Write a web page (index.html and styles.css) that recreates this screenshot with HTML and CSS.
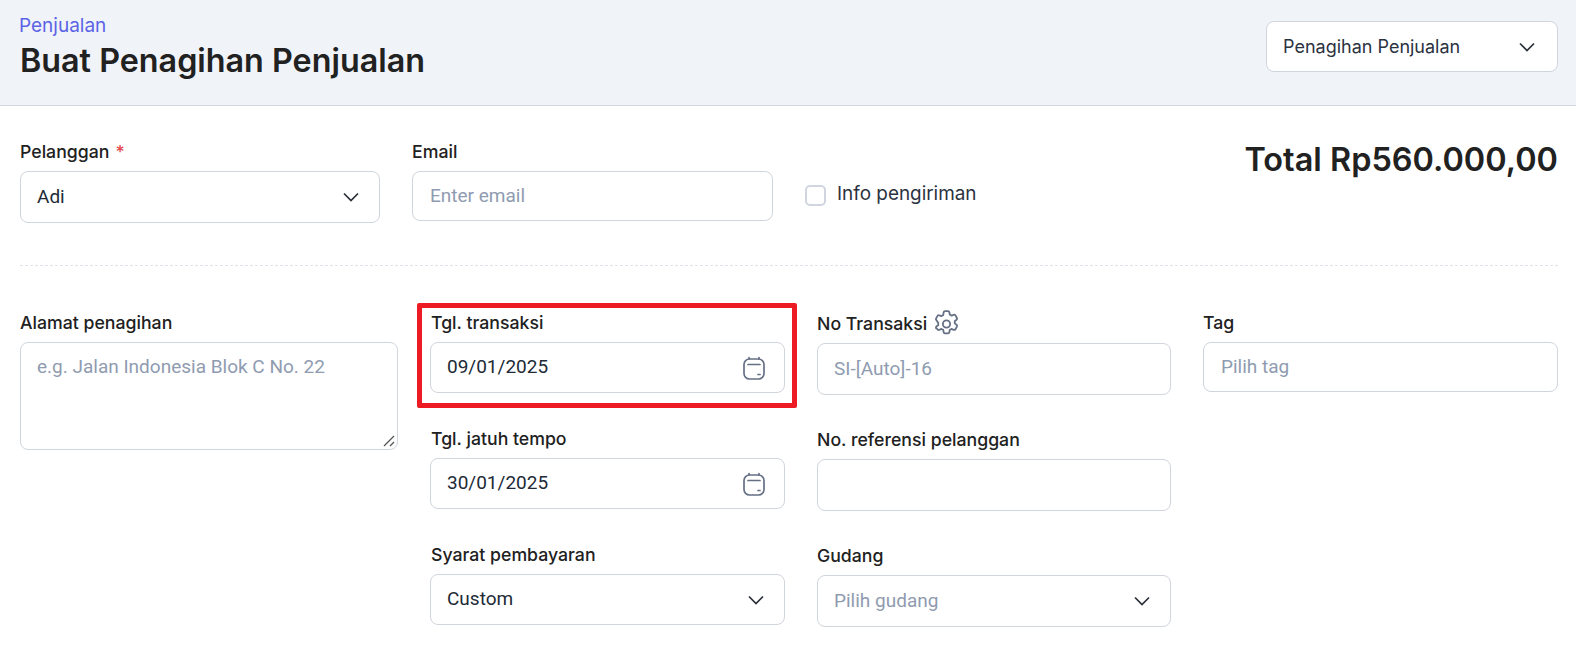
FILE: index.html
```html
<!DOCTYPE html>
<html lang="id">
<head>
<meta charset="utf-8">
<title>Buat Penagihan Penjualan</title>
<link rel="stylesheet" href="styles.css">
</head>
<body>
<svg class="sprite" width="0" height="0">
  <symbol id="chev" viewBox="0 0 16 16"><path d="M1 4.5 8 11.5 15 4.5" fill="none" stroke="currentColor" stroke-width="1.7"/></symbol>
  <symbol id="cal" viewBox="0 0 24 24"><g fill="none" stroke="#667085" stroke-width="1.7" stroke-linecap="round"><rect x="2" y="3" width="20" height="20" rx="5.5"/><path d="M7 1.5V3M17 1.5V3M6 8.5H18M16 18.5H18"/></g></symbol>
</svg>
<header class="head">
  <div>
    <a class="crumb">Penjualan</a>
    <h1>Buat Penagihan Penjualan</h1>
  </div>
  <div class="box type-select">
    <span>Penagihan Penjualan</span>
    <svg class="chev"><use href="#chev"/></svg>
  </div>
</header>
<main class="main">
  <section class="top">
    <div class="f f-cust">
      <label>Pelanggan <i>*</i></label>
      <div class="box tall"><span class="val">Adi</span><svg class="chev"><use href="#chev"/></svg></div>
    </div>
    <div class="f f-email">
      <label>Email</label>
      <div class="box short"><span class="ph">Enter email</span></div>
    </div>
    <div class="ship"><span class="check"></span><span>Info pengiriman</span></div>
    <div class="total">Total Rp560.000,00</div>
  </section>
  <hr class="rule">
  <section class="grid">
    <div class="col c1">
      <div class="f">
        <label>Alamat penagihan</label>
        <div class="box area"><span class="ph">e.g. Jalan Indonesia Blok C No. 22</span>
          <svg class="grip" width="12" height="12" viewBox="0 0 12 12"><path d="M1 11 11 1M7 11 11 7" stroke="#555" stroke-width="1.3" fill="none"/></svg>
        </div>
      </div>
    </div>
    <div class="col c2">
      <div class="f">
        <label>Tgl. transaksi</label>
        <div class="box"><span class="val">09/01/2025</span><svg class="cal"><use href="#cal"/></svg></div>
      </div>
      <div class="f">
        <label>Tgl. jatuh tempo</label>
        <div class="box"><span class="val">30/01/2025</span><svg class="cal"><use href="#cal"/></svg></div>
      </div>
      <div class="f">
        <label>Syarat pembayaran</label>
        <div class="box"><span class="val">Custom</span><svg class="chev"><use href="#chev"/></svg></div>
      </div>
    </div>
    <div class="col c3">
      <div class="f">
        <label>No Transaksi
          <svg class="gear" viewBox="0 0 24 24" fill="none" stroke="#667085" stroke-width="1.5" stroke-linejoin="round"><path d="M9.6 2.8a1.2 1.2 0 0 1 1.2-1h2.4a1.2 1.2 0 0 1 1.2 1l.3 1.900c.5.2 1 .5 1.400.8l1.800-.7a1.200 1.200 0 0 1 1.500.5l1.200 2.100a1.200 1.200 0 0 1-.3 1.500l-1.500 1.200a7 7 0 0 1 0 1.800l1.500 1.200a1.200 1.200 0 0 1 .3 1.500l-1.200 2.100a1.200 1.200 0 0 1-1.500.5l-1.800-.7c-.4.3-.9.6-1.400.8l-.3 1.900a1.200 1.200 0 0 1-1.200 1h-2.400a1.200 1.200 0 0 1-1.200-1l-.3-1.900c-.5-.2-1-.5-1.400-.8l-1.800.7a1.200 1.200 0 0 1-1.500-.5L3.400 16a1.200 1.200 0 0 1 .3-1.500l1.500-1.200a7 7 0 0 1 0-1.800L3.700 9.300A1.200 1.200 0 0 1 3.400 7.800l1.200-2.100a1.200 1.200 0 0 1 1.500-.5l1.800.7c.4-.3.9-.6 1.400-.8z"/><circle cx="12" cy="12.400" r="3"/></svg>
        </label>
        <div class="box tall"><span class="ph">SI-[Auto]-16</span></div>
      </div>
      <div class="f">
        <label>No. referensi pelanggan</label>
        <div class="box tall"></div>
      </div>
      <div class="f">
        <label>Gudang</label>
        <div class="box tall"><span class="ph">Pilih gudang</span><svg class="chev"><use href="#chev"/></svg></div>
      </div>
    </div>
    <div class="col c4">
      <div class="f">
        <label>Tag</label>
        <div class="box short"><span class="ph">Pilih tag</span></div>
      </div>
    </div>
  </section>
  <div class="mark"></div>
</main>
</body>
</html>
```
FILE: styles.css
```css
html, body { margin: 0; height: 100%; overflow: hidden; background: #fff; }
body { font-family: "Inter", "Liberation Sans", sans-serif; color: #212121; }
.sprite { position: absolute; }

.head {
  height: 105px;
  box-sizing: content-box;
  border-bottom: 1px solid #d4d7df;
  background: #f0f3f8;
  padding: 0 18px 0 20px;
  display: flex;
  justify-content: space-between;
  align-items: flex-start;
}
.crumb { display: block; margin: 14px 0 0 -1px; font-size: 19px; line-height: 24px; color: #5b63e6; }
h1 { margin: 4px 0 0; font-size: 32.3px; line-height: 38px; font-weight: 600; color: #212121; }
.type-select { width: 292px; margin-top: 21px; height: 51px; font-size: 18px; color: #2b3240; padding-left: 18px; }
.type-select .chev { margin-right: 6px; }

.box {
  box-sizing: border-box;
  height: 51px;
  padding: 0 16px;
  display: flex;
  align-items: center;
  justify-content: space-between;
  background: #fff;
  border: 1px solid #d0d5dd;
  border-radius: 8px;
  position: relative;
}
.box.tall { height: 52px; }
.box.short { height: 50px; padding-left: 17px; }
.val { font-family: "Roboto", sans-serif; font-size: 19px; color: #212a36; padding-bottom: 2px; }
.ph { font-family: "Roboto", sans-serif; font-size: 19px; color: #8f9bb0; padding-bottom: 2px; }
.chev { width: 16px; height: 16px; color: #2a2f38; margin-right: 4px; }
.cal { width: 24px; height: 24px; margin-right: 2px; }
.gear { width: 29px; height: 29px; margin-left: -1px; flex: none; }

label {
  display: flex;
  align-items: center;
  gap: 6px;
  height: 24px;
  margin-bottom: 8px;
  font-size: 17.7px;
  font-weight: 500;
  color: #212121;
}
label i { color: #e5484d; font-style: normal; }

.main { padding: 0 18px 0 20px; position: relative; }
.top { display: flex; align-items: flex-start; padding-top: 33px; height: 126px; box-sizing: content-box; }
.f-cust { width: 360px; }
.f-email { width: 361px; margin-left: 32px; }
.ship { display: flex; align-items: center; gap: 11px; margin: 43px 0 0 32px; font-size: 18.9px; color: #2b3240; }
.ship span:last-child { padding-bottom: 4px; }
.check { width: 21px; height: 21px; box-sizing: border-box; border: 2px solid #d0d5e0; border-radius: 5px; }
.total { margin-left: auto; margin-top: -1px; font-size: 32.45px; line-height: 44px; font-weight: 600; white-space: nowrap; }

.rule { height: 0; margin: 0; border: 0; border-top: 1px dashed #dfe3ea; }

.grid { display: flex; padding-top: 44px; }
.col { display: flex; flex-direction: column; }
.c1 { width: 378px; }
.c2 { width: 355px; margin-left: 32px; gap: 33px; }
.c2 label { padding-left: 1px; }
.c3 { width: 354px; margin-left: 32px; gap: 32px; padding-top: 1px; }
.c4 { width: 355px; margin-left: 32px; }
.area { height: 108px; align-items: flex-start; padding-top: 12px; }
.grip { position: absolute; right: 2px; bottom: 2px; }

.mark {
  position: absolute;
  left: 417px;
  top: 197px;
  width: 380px;
  height: 105px;
  box-sizing: border-box;
  border: 5px solid #ed1c24;
  border-radius: 2px;
}
```
